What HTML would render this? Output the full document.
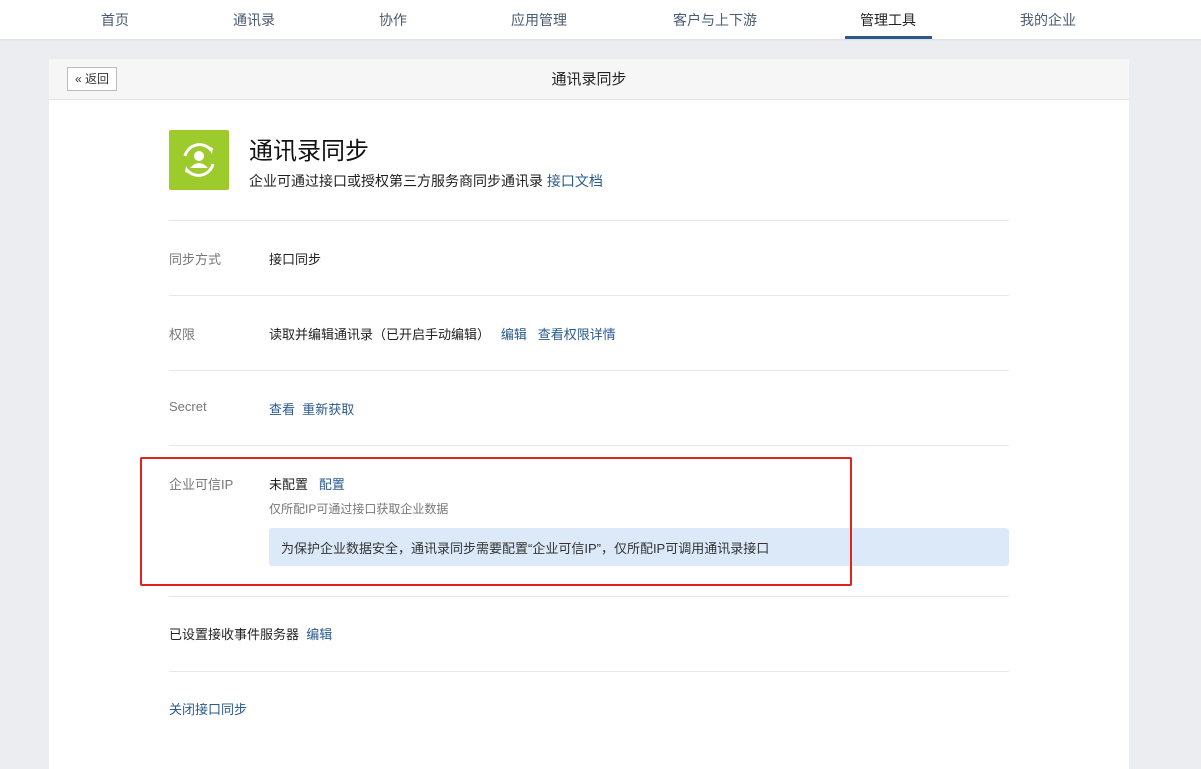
<!DOCTYPE html><html><head><meta charset="utf-8"><style>
body{margin:0;width:1201px;height:762px;overflow:hidden;background:#ebedf0;font-family:"Liberation Sans","Noto Sans CJK SC",sans-serif;font-size:13px;color:#222;position:relative}
.a{position:absolute;white-space:nowrap}
.nav{position:absolute;left:0;top:0;width:1201px;height:39px;background:#fff;box-shadow:0 1px 2px rgba(0,0,0,.08)}
.nav span{position:absolute;top:10px;font-size:14px;color:#4a5b70;transform:translateX(-50%)}
.card{position:absolute;left:49px;top:59px;width:1080px;height:710px;background:#fff}
.hd{position:absolute;left:0;top:0;width:1080px;height:40px;background:#f6f6f6;border-bottom:1px solid #e4e4e4}
.ln{position:absolute;left:169px;width:840px;height:1px;background:#e6e6e6}
.lb{color:#777}
.lk{color:#2b5a8c}
</style></head><body>
<div class="nav">
<span style="left:115px">首页</span><span style="left:254px">通讯录</span><span style="left:393px">协作</span><span style="left:539px">应用管理</span><span style="left:715px">客户与上下游</span><span style="left:888px;color:#222">管理工具</span><span style="left:1048px">我的企业</span>
<div class="a" style="left:845px;top:36px;width:87px;height:3px;background:#2d5a8b"></div>
</div>
<div class="card"><div class="hd">
<div class="a" style="left:18px;top:8px;width:50px;height:24px;border:1px solid #bbb;background:#fff;box-sizing:border-box;font-size:12px;line-height:22px;text-align:center;color:#333">« 返回</div>
<div class="a" style="left:0;width:1080px;text-align:center;top:9px;font-size:15px">通讯录同步</div></div></div>
<div class="a" style="left:169px;top:130px;width:60px;height:60px;background:#9ccb2b;border-radius:2px">
<svg width="60" height="60" viewBox="0 0 60 60"><path d="M16 26A15 15 0 0 1 42 20M44 34A15 15 0 0 1 18 40" fill="none" stroke="#fff" stroke-width="3"/><path d="M38 16l6 2-1 6zM22 44l-6-2 1-6z" fill="#fff"/><circle cx="30" cy="26" r="5" fill="#fff"/><path d="M21 38q9-10 18 0z" fill="#fff"/></svg></div>
<div class="a" style="left:249px;top:131px;font-size:24px;color:#111">通讯录同步</div>
<div class="a" style="left:249px;top:171px;font-size:14px">企业可通过接口或授权第三方服务商同步通讯录 <span class="lk">接口文档</span></div>
<div class="ln" style="top:220px"></div><div class="ln" style="top:295px"></div><div class="ln" style="top:370px"></div><div class="ln" style="top:445px"></div><div class="ln" style="top:596px"></div><div class="ln" style="top:671px"></div>
<div class="a lb" style="left:169px;top:249px">同步方式</div><div class="a" style="left:269px;top:249px">接口同步</div>
<div class="a lb" style="left:169px;top:324px">权限</div><div class="a" style="left:269px;top:324px">读取并编辑通讯录（已开启手动编辑） &nbsp; <span class="lk">编辑</span> &nbsp; <span class="lk">查看权限详情</span></div>
<div class="a lb" style="left:169px;top:399px">Secret</div><div class="a lk" style="left:269px;top:399px">查看 &nbsp;重新获取</div>
<div class="a lb" style="left:169px;top:474px">企业可信IP</div><div class="a" style="left:269px;top:474px">未配置 &nbsp; <span class="lk">配置</span></div>
<div class="a" style="left:269px;top:500px;font-size:12px;color:#777">仅所配IP可通过接口获取企业数据</div>
<div class="a" style="left:269px;top:528px;width:740px;height:38px;background:#dbe9f9;border-radius:3px"><span class="a" style="left:12px;top:10px;color:#333">为保护企业数据安全，通讯录同步需要配置“企业可信IP”，仅所配IP可调用通讯录接口</span></div>
<div class="a" style="left:140px;top:457px;width:712px;height:129px;border:2px solid #e0231c;border-radius:2px;box-sizing:border-box"></div>
<div class="a" style="left:169px;top:624px">已设置接收事件服务器 &nbsp;<span class="lk">编辑</span></div>
<div class="a lk" style="left:169px;top:699px">关闭接口同步</div>
</body></html>
